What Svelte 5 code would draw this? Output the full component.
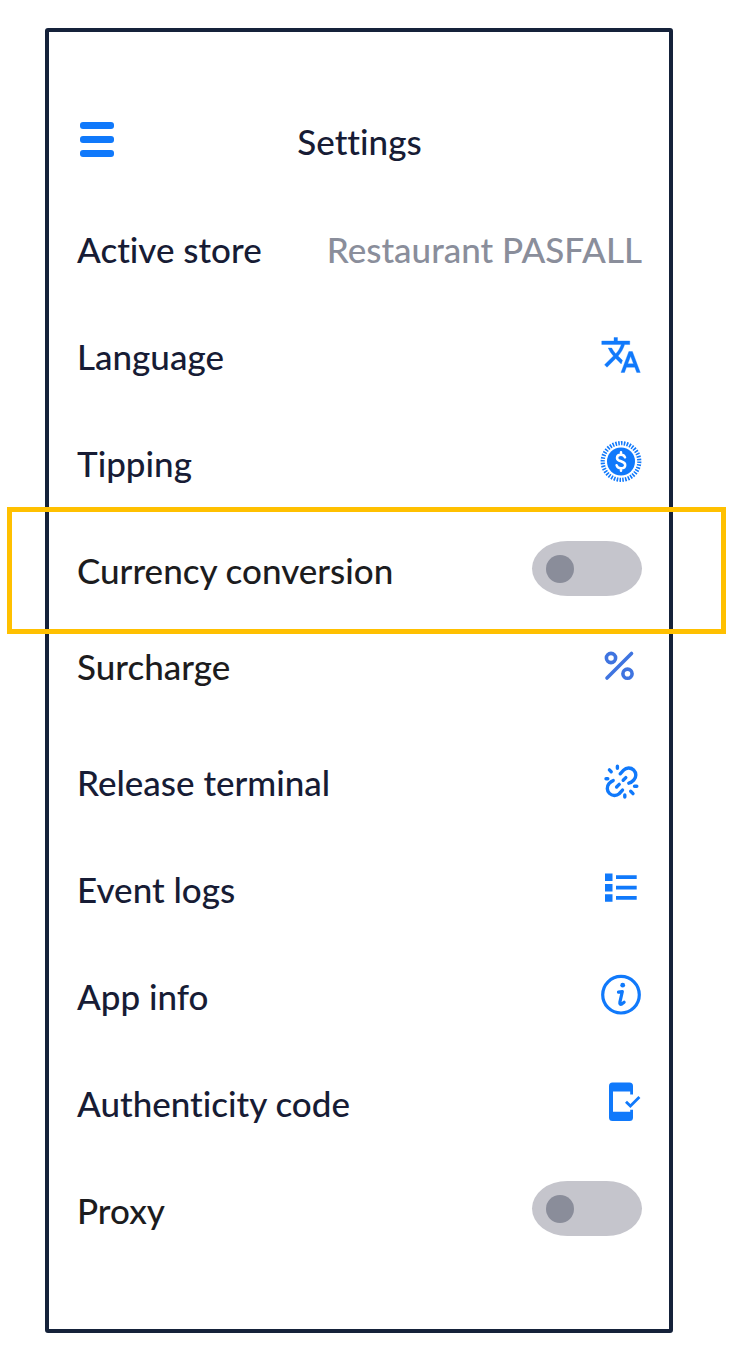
<script>
  let currencyConversion = false;
  let proxy = false;
</script>

<!-- 42x42 icons, one per settings row -->
{#snippet icon(name)}
  {#if name === 'language'}
    <svg class="icon" viewBox="0 0 24 24" aria-hidden="true">
      <path
        fill="currentColor"
        stroke="currentColor"
        stroke-width="0.2"
        d="M12.87 15.07l-2.54-2.51.03-.03c1.74-1.94 2.98-4.17 3.71-6.53H17V4h-7V2H8v2H1v1.99h11.17C11.5 7.92 10.44 9.75 9 11.35 8.07 10.32 7.3 9.19 6.69 8h-2c.73 1.63 1.73 3.17 2.98 4.56l-5.09 5.02L4 19l5-5 3.11 3.11.76-2.04zM18.5 10h-2L12 22h2l1.12-3h4.75L21 22h2l-4.5-12zm-2.62 7l1.62-4.33L19.12 17h-3.24z"
      />
    </svg>
  {:else if name === 'tipping'}
    <svg class="icon" viewBox="0 0 42 42" aria-hidden="true">
      <circle cx="21" cy="20.5" r="14" fill="currentColor" />
      <circle cx="21" cy="20.5" r="18.3" fill="none" stroke="currentColor" stroke-width="4.2" pathLength="80" stroke-dasharray="1.1 0.9" />
      <path
        fill="none"
        stroke="#fff"
        stroke-width="2.5"
        stroke-linecap="round"
        d="M25 16.3c-.6-1.700-2-2.600-4-2.600-2.300 0-4 1.300-4 3.200 0 4.300 8.200 2.500 8.200 7 0 2.100-1.800 3.400-4.200 3.400-2.200 0-3.900-1-4.400-3M21 11.300v2.200M21 27.400v2.300"
      />
    </svg>
  {:else if name === 'surcharge'}
    <svg class="icon soft" viewBox="0 0 42 42" aria-hidden="true">
      <g fill="none" stroke="currentColor" stroke-width="3.6" stroke-linecap="round">
        <circle cx="11" cy="13" r="4.6" />
        <circle cx="27.5" cy="28.7" r="4.6" />
        <path d="M31.500 8.500L7 33" />
      </g>
    </svg>
  {:else if name === 'release'}
    <svg class="icon" viewBox="0 0 42 42" aria-hidden="true">
      <g fill="none" stroke="currentColor" stroke-width="3.4" stroke-linecap="round">
        <path d="M20.200 13.800l3.400-3.700a7.100 7.100 0 0 1 10.200 9.900c-1.400 1.500-2.700 2.700-5 3.200" />
        <path d="M13.200 20.600c-1.900.6-3.100 1.800-4.200 3a7.200 7.200 0 0 0 10.200 10.100l3.300-3.600" />
        <path d="M23.200 20.200l2.600-2.600M16.600 27l2.600-2.600" />
        <path d="M17.400 6.200v2M9.400 9.900l1.800 1.800M6 18.800h1.800M34.500 26.200h2.300M30.700 31.300l2.300 2.300M24.800 35v2" />
      </g>
    </svg>
  {:else if name === 'logs'}
    <svg class="icon" viewBox="0 0 42 42" aria-hidden="true">
      <path
        fill="currentColor"
        d="M5 6.500h7.500V14H5zM5 16.900h7.500v7.500H5zM5 27.200h7.500v7.500H5zM16 8.200h20.700v3.800H16zM16 18.700h20.700v3.800H16zM16 29h20.700v3.800H16z"
      />
    </svg>
  {:else if name === 'info'}
    <svg class="icon" viewBox="0 0 42 42" aria-hidden="true">
      <circle cx="21" cy="20.7" r="18.3" fill="none" stroke="currentColor" stroke-width="3.2" />
      <circle cx="22.7" cy="11.2" r="2.4" fill="currentColor" />
      <path
        fill="none"
        stroke="currentColor"
        stroke-width="3.2"
        stroke-linecap="round"
        stroke-linejoin="round"
        d="M18.500 18.200l3.800-.6-2.400 10.500c-.5 2.300.6 2.700 2.200 1.700l2-1.500"
      />
    </svg>
  {:else if name === 'code'}
    <svg class="icon" viewBox="0 0 42 42" aria-hidden="true">
      <path
        fill="currentColor"
        d="M12.500 1.500h17A3.500 3.500 0 0 1 33 5v8.500h-2.800v-3H13v20.300h17.200v-2H33v7.700a3.500 3.500 0 0 1-3.500 3.500h-17A3.500 3.500 0 0 1 9 36.500V5a3.500 3.500 0 0 1 3.500-3.500z"
      />
      <path fill="none" stroke="currentColor" stroke-width="2.8" d="M26 20.800l4.400 4.300 9-9" />
    </svg>
  {/if}
{/snippet}

{#snippet row(name, text)}
  <button class="row" class:surcharge={name === 'surcharge'} type="button">
    <span class="label">{text}</span>
    {@render icon(name)}
  </button>
{/snippet}

<main class="phone">
  <header>
    <button class="menu" type="button" aria-label="Menu">
      <span></span>
      <span></span>
      <span></span>
    </button>
    <h1>Settings</h1>
  </header>

  <div class="row">
    <span class="label">Active store</span>
    <span class="label store">Restaurant PASFALL</span>
  </div>
  {@render row('language', 'Language')}
  {@render row('tipping', 'Tipping')}

  <!-- highlighted row, the frame reaches over the phone border -->
  <div class="row dark highlight">
    <label class="label" for="currency">Currency conversion</label>
    <input id="currency" type="checkbox" role="switch" bind:checked={currencyConversion} />
  </div>

  {@render row('surcharge', 'Surcharge')}
  {@render row('release', 'Release terminal')}
  {@render row('logs', 'Event logs')}
  {@render row('info', 'App info')}
  {@render row('code', 'Authenticity code')}

  <div class="row dark">
    <label class="label" for="proxy">Proxy</label>
    <input id="proxy" type="checkbox" role="switch" bind:checked={proxy} />
  </div>
</main>

<style>
  :global(body) {
    margin: 0;
    background: #fff;
  }

  .phone {
    display: flex;
    flex-direction: column;
    margin: 28px 63px 20px 45px;
    padding: 52px 27px 67px 28px;
    border: 4px solid #15223a;
    border-radius: 3px;
    color: #171c35;
    font-family: Lato, "Liberation Sans", sans-serif;
    font-size: 35px;
    font-weight: 500;
    font-variant-ligatures: none;
    line-height: 42px;
  }

  header {
    display: grid;
    grid-template-columns: 40px 1fr 40px;
    align-items: center;
    height: 110px;
  }

  h1 {
    margin: 0;
    padding-top: 4px;
    font-size: 35px;
    font-weight: 500;
    text-align: center;
  }

  button {
    border: 0;
    background: none;
    color: inherit;
    font: inherit;
    font-variant-ligatures: none;
    text-align: left;
    cursor: pointer;
  }

  .menu {
    display: flex;
    flex-direction: column;
    gap: 7px;
    padding: 0 3px;
  }

  .menu span {
    height: 7px;
    border-radius: 3px;
    background: #1079fb;
  }

  .row {
    display: flex;
    align-items: center;
    justify-content: space-between;
    box-sizing: border-box;
    height: 107px;
    padding: 0;
  }

  .label {
    padding-top: 2px;
  }

  .store {
    color: #8a8e9b;
  }

  .dark,
  .surcharge {
    color: #1c1c1e;
  }

  .surcharge {
    height: 105px;
    padding-bottom: 18px;
  }

  .surcharge .label {
    padding-top: 0;
  }

  .highlight {
    position: relative;
  }

  .highlight::after {
    content: "";
    position: absolute;
    inset: -8px -84px -12px -70px;
    border: 5px solid #ffc000;
    pointer-events: none;
  }

  .icon {
    flex: none;
    width: 42px;
    height: 42px;
    color: #1079fb;
  }

  .soft {
    color: #3f74e0;
  }

  input {
    appearance: none;
    display: flex;
    align-items: center;
    box-sizing: border-box;
    width: 110px;
    height: 55px;
    margin: 0;
    padding: 0 14px;
    border-radius: 36px / 28px;
    background: #c5c5cc;
    cursor: pointer;
  }

  input::before {
    content: "";
    width: 28px;
    height: 28px;
    border-radius: 50%;
    background: #8a8d9a;
  }

  input:checked {
    justify-content: flex-end;
    background: #1079fb;
  }

  input:checked::before {
    background: #fff;
  }
</style>
